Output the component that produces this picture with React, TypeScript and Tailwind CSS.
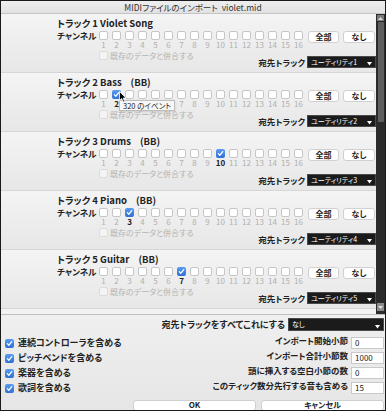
import React from 'react';

const FONT = "font-['Noto_Sans_CJK_JP','Noto_Sans',sans-serif] [font-feature-settings:'palt']";

function Box({ checked, disabled }: { checked?: boolean; disabled?: boolean }) {
  if (checked) {
    return (
      <span className="w-[9px] h-[9px] shrink-0 rounded-[2px] bg-gradient-to-b from-[#5b9cf0] to-[#2f6fd6] flex items-center justify-center">
        <svg width="7" height="7" viewBox="0 0 8 8">
          <path d="M1.5 4.2 L3.2 6 L6.6 1.8" fill="none" stroke="white" strokeWidth="1.4" strokeLinecap="round" strokeLinejoin="round" />
        </svg>
      </span>
    );
  }
  return (
    <span
      className={
        disabled
          ? 'w-[9px] h-[9px] shrink-0 rounded-[2px] bg-[#f4f4f4] border border-[#dcdcdc]'
          : 'w-[9px] h-[9px] shrink-0 rounded-[2px] bg-white border border-[#c6c6c6]'
      }
    />
  );
}

function Dropdown({ label, className }: { label: string; className: string }) {
  return (
    <div className={`relative bg-[#1b1b1b] border border-[#4a4a4a] text-white text-[7px] leading-none flex items-center pl-[3px] whitespace-nowrap ${className}`}>
      {label}
      <svg className="absolute right-[3px] bottom-[1px]" width="5" height="4" viewBox="0 0 5 4">
        <path d="M0 0 H5 L2.5 3.5 Z" fill="white" />
      </svg>
    </div>
  );
}

type Track = { n: number; name: string; bb?: boolean; on?: number; dest: string };

const tracks: Track[] = [
  { n: 1, name: 'Violet Song', dest: 'ユーティリティ1' },
  { n: 2, name: 'Bass', bb: true, on: 2, dest: 'ユーティリティ2' },
  { n: 3, name: 'Drums', bb: true, on: 10, dest: 'ユーティリティ3' },
  { n: 4, name: 'Piano', bb: true, on: 3, dest: 'ユーティリティ4' },
  { n: 5, name: 'Guitar', bb: true, on: 7, dest: 'ユーティリティ5' },
];

const ch = Array.from({ length: 16 }, (_, i) => i + 1);

function TrackRow({ t }: { t: Track }) {
  // numbers hidden under the tooltip on track 2
  const covered = (c: number) => t.n === 2 && c >= 3 && c <= 6;
  return (
    <div className="relative h-[59px] shrink-0 pl-[56px] pt-[3px] bg-gradient-to-b from-[#f4f4f4] to-[#e7e7e7] border-b border-[#d6d6d6]">
      <div className="h-[12px] flex items-center text-[9.5px] font-semibold whitespace-pre">
        {`トラック ${t.n} ${t.name}`}
        {t.bb && <span className="ml-[9px]">(BB)</span>}
      </div>
      <div className="mt-[2px] flex items-start">
        <span className="w-[42px] h-[9px] flex items-center text-[8.5px] font-semibold whitespace-nowrap">チャンネル</span>
        <div className="flex gap-[4px]">
          {ch.map((c) => (
            <Box key={c} checked={t.on === c} />
          ))}
        </div>
        <button className="ml-[5px] w-[31px] h-[12px] bg-white border border-[#d0d0d0] rounded-[3px] text-[8px] leading-none font-semibold flex items-center justify-center">
          全部
        </button>
        <button className="ml-[4px] w-[32px] h-[12px] bg-white border border-[#d0d0d0] rounded-[3px] text-[8px] leading-none font-semibold flex items-center justify-center">
          なし
        </button>
      </div>
      <div className="flex h-[9px] -mt-[3px] text-[8px] leading-[9px]">
        <span className="w-[42px]" />
        <div className="flex gap-[4px]">
          {ch.map((c) => (
            <span
              key={c}
              className={
                t.on === c
                  ? 'w-[9px] text-center whitespace-nowrap flex justify-center text-[#222] font-bold'
                  : 'w-[9px] text-center whitespace-nowrap flex justify-center text-[#b0b0b0]'
              }
            >
              {covered(c) ? '' : c}
            </span>
          ))}
        </div>
      </div>
      <div className="mt-[2px] flex items-start">
        <div className="ml-[42px] h-[9px] flex items-center gap-[2px] text-[8px] text-[#b4b4b4] whitespace-nowrap">
          <Box disabled />
          <span>既存のデータと併合する</span>
        </div>
        <div className="ml-auto mt-[5px] flex items-center gap-[2px]">
          <span className="text-[8.5px] font-semibold whitespace-nowrap">宛先トラック</span>
          <Dropdown label={t.dest} className="w-[69px] h-[12px]" />
        </div>
      </div>
      {t.n === 2 && (
        <>
          <div className="absolute left-[118px] top-[27px] h-[11px] px-[3px] bg-[#f7f7f7] border border-[#bdbdbd] text-[7.5px] leading-none flex items-center shadow-sm whitespace-nowrap">
            320 のイベント
          </div>
          <svg className="absolute left-[118px] top-[18px]" width="8" height="12" viewBox="0 0 8 12">
            <path d="M0.5 0.5 L0.5 9.5 L2.7 7.6 L4.2 11 L5.6 10.4 L4.2 7.1 L7 7.1 Z" fill="black" stroke="white" strokeWidth="0.8" />
          </svg>
        </>
      )}
    </div>
  );
}

function Scrollbar() {
  return (
    <div className="w-[9px] shrink-0 bg-[#2b2b2b] flex flex-col items-center pt-[1px] pb-[3px]">
      <div className="w-[7px] h-[6px] bg-[#7a7a7a] flex items-center justify-center">
        <svg width="5" height="3" viewBox="0 0 5 3"><path d="M0 3 H5 L2.5 0 Z" fill="#d8d8d8" /></svg>
      </div>
      <div className="w-[6px] h-[100px] mt-[1px] bg-[#5e5e5e] rounded-[1px]" />
      <div className="flex-1" />
      <div className="w-[7px] h-[8px] bg-[#8a8a8a] flex items-center justify-center">
        <svg width="5" height="3" viewBox="0 0 5 3"><path d="M0 0 H5 L2.5 3 Z" fill="#e0e0e0" /></svg>
      </div>
    </div>
  );
}

const opts = ['連続コントローラを含める', 'ピッチベンドを含める', '楽器を含める', '歌詞を含める'];
const fields: [string, string][] = [
  ['インポート開始小節', '0'],
  ['インポート合計小節数', '1000'],
  ['頭に挿入する空白小節の数', '0'],
  ['このティック数分先行する音も含める', '15'],
];

export default function App() {
  return (
    <div className={`w-[386px] h-[411px] bg-[#ececec] border border-[#1a1a1a] flex flex-col overflow-hidden text-[#222] ${FONT}`}>
      <div className="h-[13px] shrink-0 flex items-center justify-center bg-gradient-to-b from-[#eeeeee] to-[#e2e2e2] border-b border-[#c4c4c4] text-[8.5px] text-[#333] whitespace-pre">
        MIDIファイルのインポート  violet.mid
      </div>
      <div className="h-[300px] shrink-0 flex">
        <div className="flex-1 flex flex-col overflow-hidden bg-[#f2f2f2]">
          {tracks.map((t) => (
            <TrackRow key={t.n} t={t} />
          ))}
        </div>
        <Scrollbar />
      </div>
      <div className="flex-1 border-t border-[#bfbfbf] bg-gradient-to-b from-[#efefef] to-[#e6e6e6] pr-[1px]">
        <div className="mt-[3px] flex items-center justify-end gap-[3px]">
          <span className="text-[9px] font-semibold whitespace-nowrap">宛先トラックをすべてこれにする</span>
          <Dropdown label="なし" className="w-[96px] h-[13px]" />
        </div>
        <div className="mt-[4px] flex">
          <div className="pl-[4px] flex flex-col">
            {opts.map((o) => (
              <div key={o} className="h-[15px] flex items-center gap-[4px] text-[9px] font-semibold whitespace-nowrap">
                <Box checked />
                <span>{o}</span>
              </div>
            ))}
          </div>
          <div className="ml-auto flex flex-col">
            {fields.map(([l, v]) => (
              <div key={l} className="h-[15px] flex items-start justify-end gap-[3px]">
                <span className="h-[9px] text-[8.5px] font-semibold leading-[9px] whitespace-nowrap">{l}</span>
                <div className="w-[33px] h-[12px] mt-[1px] bg-white border border-[#c9c9c9] text-[8px] leading-none flex items-end pl-[3px] pb-[1px]">
                  {v}
                </div>
              </div>
            ))}
          </div>
        </div>
        <div className="mt-[4px] flex justify-end gap-[5px]">
          <button className="w-[123px] h-[11px] bg-white border border-[#cfcfcf] rounded-[3px] text-[8px] leading-none font-semibold flex items-center justify-center">
            OK
          </button>
          <button className="w-[123px] h-[11px] bg-white border border-[#cfcfcf] rounded-[3px] text-[8px] leading-none font-semibold flex items-center justify-center">
            キャンセル
          </button>
        </div>
      </div>
    </div>
  );
}
